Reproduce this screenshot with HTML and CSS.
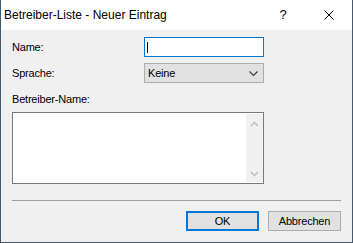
FILE: index.html
```html
<!DOCTYPE html>
<html lang="de">
<head>
<meta charset="utf-8">
<title>Betreiber-Liste - Neuer Eintrag</title>
<link rel="stylesheet" href="styles.css">
</head>
<body>
<div class="window">
  <div class="titlebar">
    <span class="title">Betreiber-Liste - Neuer Eintrag</span>
    <div class="caption-btn help">?</div>
    <div class="caption-btn close">
      <svg width="10" height="10" viewBox="0 0 10 10"><path d="M0.5 0.5 L9.5 9.5 M9.5 0.5 L0.5 9.5" stroke="#000" stroke-width="1" fill="none"/></svg>
    </div>
  </div>
  <div class="content">
    <div class="form">
      <label class="lbl">Name:</label>
      <div class="input"><span class="caret"></span></div>
      <label class="lbl">Sprache:</label>
      <div class="select">
        <span>Keine</span>
        <svg class="chev" width="9" height="5" viewBox="0 0 9 5"><path d="M0.5 0.5 L4.5 4.5 L8.5 0.5" stroke="#404040" stroke-width="1.2" fill="none"/></svg>
      </div>
    </div>
    <div class="lbl area-label">Betreiber-Name:</div>
    <div class="textarea">
      <div class="scrollbar">
        <svg width="9" height="6" viewBox="0 0 9 6"><path d="M1 5 L4.5 1.5 L8 5" stroke="#c2c2c2" stroke-width="1.6" fill="none"/></svg>
        <svg width="9" height="6" viewBox="0 0 9 6"><path d="M1 1 L4.5 4.5 L8 1" stroke="#c2c2c2" stroke-width="1.6" fill="none"/></svg>
      </div>
    </div>
    <div class="separator"></div>
    <div class="buttons">
      <div class="btn default">OK</div>
      <div class="btn">Abbrechen</div>
    </div>
  </div>
</div>
</body>
</html>
```
FILE: styles.css
```css
html, body {
  margin: 0;
  padding: 0;
  background: #f0f0f0;
}
body {
  font-family: "Liberation Sans", Arial, sans-serif;
  color: #000;
}
.window {
  width: 353px;
  height: 243px;
  box-sizing: border-box;
  border: 1px solid #44596e;
  border-top: none;
  background: #f0f0f0;
  display: flex;
  flex-direction: column;
}
.titlebar {
  height: 30px;
  background: #fff;
  display: flex;
  align-items: center;
  flex: none;
}
.title {
  flex: 1;
  padding-left: 3px;
  font-size: 12px;
  padding-bottom: 1px;
}
.caption-btn {
  width: 46px;
  height: 30px;
  display: flex;
  align-items: center;
  justify-content: center;
}
.help {
  font-size: 13px;
  padding-bottom: 1px;
}
.content {
  padding: 0 11px;
  display: flex;
  flex-direction: column;
}
.form {
  margin-top: 7px;
  display: grid;
  grid-template-columns: 132px 120px;
  grid-auto-rows: 20px;
  row-gap: 6px;
  align-items: center;
}
.lbl {
  font-size: 11px;
  letter-spacing: -0.2px;
}
.input {
  height: 20px;
  box-sizing: border-box;
  border: 1px solid #0078d7;
  background: #fff;
  display: flex;
  align-items: center;
  padding-left: 2px;
}
.caret {
  width: 1px;
  height: 11px;
  background: #000;
}
.select {
  height: 20px;
  box-sizing: border-box;
  border: 1px solid #adadad;
  background: #e1e1e1;
  display: flex;
  align-items: center;
  justify-content: space-between;
  padding: 0 5px 0 3px;
  font-size: 11px;
  letter-spacing: -0.2px;
}
.chev {
  margin-top: 1px;
}
.area-label {
  margin-top: 9px;
  height: 14px;
  line-height: 14px;
}
.textarea {
  margin-top: 6px;
  width: 252px;
  height: 72px;
  box-sizing: border-box;
  border: 1px solid #7a7a7a;
  background: #fff;
  padding: 1px 0 1px 1px;
  display: flex;
  justify-content: flex-end;
}
.scrollbar {
  width: 17px;
  background: #f0f0f0;
  display: flex;
  flex-direction: column;
  justify-content: space-between;
  align-items: center;
  padding: 7px 0 5px;
  box-sizing: border-box;
}
.separator {
  margin-top: 16px;
  height: 1px;
  background: #a0a0a0;
}
.buttons {
  margin-top: 10px;
  display: flex;
  justify-content: flex-end;
  gap: 9px;
}
.btn {
  width: 73px;
  height: 20px;
  box-sizing: border-box;
  border: 1px solid #adadad;
  background: #e1e1e1;
  display: flex;
  align-items: center;
  justify-content: center;
  font-size: 11px;
  letter-spacing: -0.2px;
}
.btn.default {
  border: 2px solid #0078d7;
}
```
